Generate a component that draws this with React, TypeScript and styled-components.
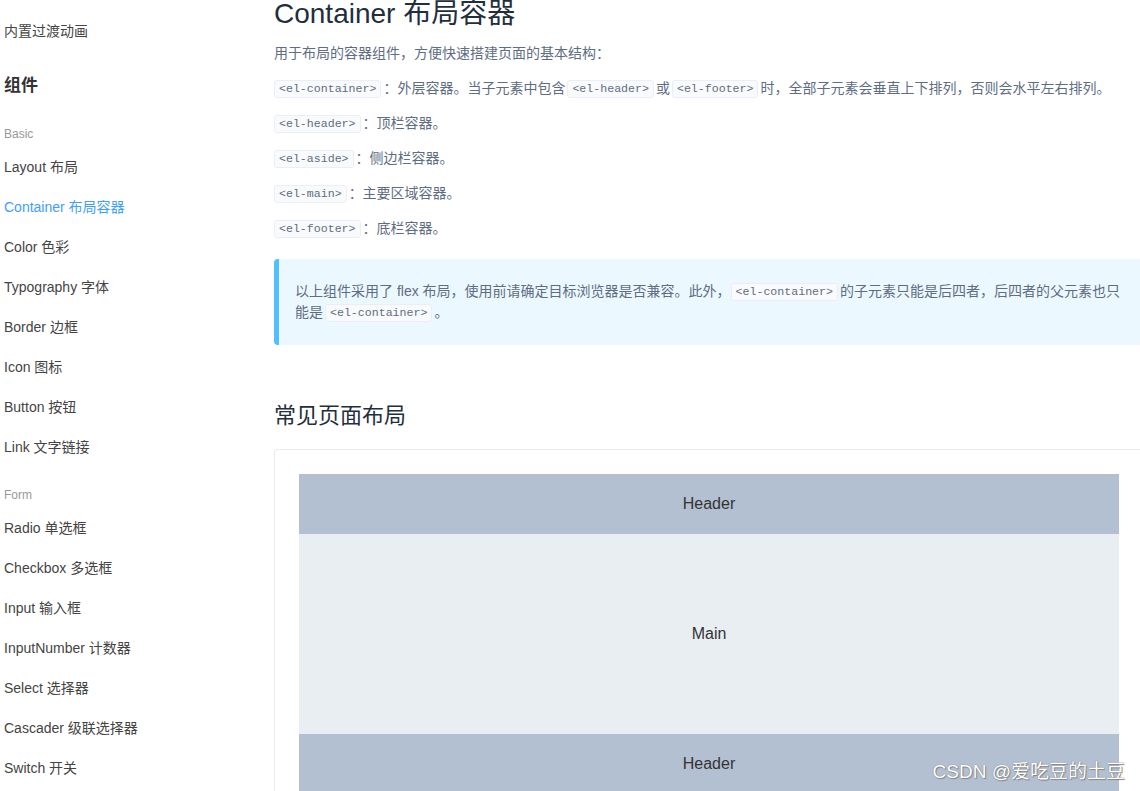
import React from "react"
import styled, { createGlobalStyle } from "styled-components"

const GlobalStyle = createGlobalStyle`
  html, body {
    margin: 0;
    padding: 0;
    overflow: hidden;
    background: #fff;
  }
  body {
    font-family: "Liberation Sans", Arial, "Noto Sans CJK SC", sans-serif;
    -webkit-font-smoothing: antialiased;
  }
`

const Page = styled.div`
  display: flex;
  align-items: flex-start;
  width: 1140px;
  height: 791px;
  overflow: hidden;
  position: relative;
`

const Side = styled.nav`
  flex: none;
  width: 270px;
  padding: 11px 0 0 4px;
`

const NavItem = styled.div<{ $active?: boolean }>`
  height: 40px;
  line-height: 40px;
  font-size: 14px;
  color: ${p => (p.$active ? "#409eff" : "#444")};
  white-space: nowrap;
`

const NavTitle = styled.div`
  margin-top: 15px;
  height: 40px;
  line-height: 40px;
  font-size: 17px;
  font-weight: bold;
  color: #333;
`

const NavGroup = styled.div`
  margin-top: 15px;
  height: 26px;
  line-height: 26px;
  font-size: 12px;
  color: #999;
`

const Content = styled.main`
  flex: none;
  width: 870px;
`

const Title = styled.h2`
  margin: 0 0 15px;
  font-size: 28px;
  line-height: 28px;
  font-weight: 400;
  color: #1f2f3d;
`

const Text = styled.p`
  margin: 14px 0;
  font-size: 14px;
  line-height: 21px;
  color: #5e6d82;
  white-space: nowrap;
`

const Code = styled.code`
  display: inline-block;
  line-height: 16px;
  margin: 0 2px;
  padding: 0 4px;
  font-family: "Liberation Mono", "Courier New", monospace;
  font-size: 11.6px;
  color: #5e6d82;
  background: #f9fafc;
  border: 1px solid #eaeefb;
  border-radius: 3px;
  vertical-align: 1px;

  &:first-child {
    margin-left: 0;
  }
`

const Tip = styled.div`
  margin: 20px 0;
  padding: 8px 16px;
  background: #ecf8ff;
  border-left: 5px solid #50bfff;
  border-radius: 4px;

  ${Text} {
    white-space: normal;
  }
`

const Subtitle = styled.h3`
  margin: 56px 0 18px;
  font-size: 22px;
  line-height: 30px;
  font-weight: 400;
  color: #1f2f3d;
`

const Demo = styled.div`
  border: 1px solid #ebebeb;
  border-radius: 3px;
  padding: 24px;
`

const Bar = styled.div<{ $tone: "header" | "main" }>`
  height: ${p => (p.$tone === "main" ? 200 : 60)}px;
  line-height: ${p => (p.$tone === "main" ? 200 : 60)}px;
  text-align: center;
  font-size: 16px;
  color: #333;
  background: ${p => (p.$tone === "main" ? "#e9eef3" : "#b3c0d1")};
`

const Watermark = styled.div`
  position: absolute;
  right: 15px;
  bottom: 8px;
  font-size: 19px;
  color: #fff;
  text-shadow: 0 0 1px #666, 1px 1px 1px #888;
  white-space: nowrap;
`

const basic = [
  "Layout 布局",
  "Container 布局容器",
  "Color 色彩",
  "Typography 字体",
  "Border 边框",
  "Icon 图标",
  "Button 按钮",
  "Link 文字链接",
]

const form = [
  "Radio 单选框",
  "Checkbox 多选框",
  "Input 输入框",
  "InputNumber 计数器",
  "Select 选择器",
  "Cascader 级联选择器",
  "Switch 开关",
]

const parts = [
  ["<el-header>", "：顶栏容器。"],
  ["<el-aside>", "：侧边栏容器。"],
  ["<el-main>", "：主要区域容器。"],
  ["<el-footer>", "：底栏容器。"],
]

const App = () => {
  return (
    <>
      <GlobalStyle />
      <Page>
        <Side>
          <NavItem>内置过渡动画</NavItem>
          <NavTitle>组件</NavTitle>
          <NavGroup>Basic</NavGroup>
          {basic.map(item => (
            <NavItem key={item} $active={item.startsWith("Container")}>
              {item}
            </NavItem>
          ))}
          <NavGroup>Form</NavGroup>
          {form.map(item => (
            <NavItem key={item}>{item}</NavItem>
          ))}
        </Side>

        <Content>
          <Title>Container 布局容器</Title>
          <Text>用于布局的容器组件，方便快速搭建页面的基本结构：</Text>
          <Text>
            <Code>&lt;el-container&gt;</Code>：外层容器。当子元素中包含
            <Code>&lt;el-header&gt;</Code>或<Code>&lt;el-footer&gt;</Code>
            时，全部子元素会垂直上下排列，否则会水平左右排列。
          </Text>
          {parts.map(([tag, desc]) => (
            <Text key={tag}>
              <Code>{tag}</Code>
              {desc}
            </Text>
          ))}

          <Tip>
            <Text>
              以上组件采用了 flex 布局，使用前请确定目标浏览器是否兼容。此外，
              <Code>&lt;el-container&gt;</Code>
              的子元素只能是后四者，后四者的父元素也只能是
              <Code>&lt;el-container&gt;</Code>。
            </Text>
          </Tip>

          <Subtitle>常见页面布局</Subtitle>
          <Demo>
            <Bar $tone="header">Header</Bar>
            <Bar $tone="main">Main</Bar>
            <Bar $tone="header">Header</Bar>
          </Demo>
        </Content>

        <Watermark>CSDN @爱吃豆的土豆</Watermark>
      </Page>
    </>
  )
}

export default App
